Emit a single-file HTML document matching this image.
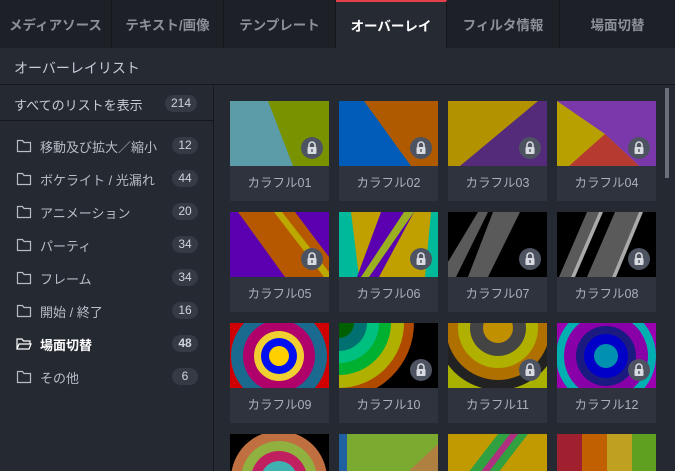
<!DOCTYPE html><html><head><meta charset="utf-8"><style>
*{margin:0;padding:0;box-sizing:border-box}
html,body{width:675px;height:471px;overflow:hidden}
body{background:#252932;font-family:"Liberation Sans","Noto Sans CJK JP",sans-serif;position:relative}
.tabs{position:absolute;left:0;top:0;width:675px;height:48px;background:#1d2027;display:flex}
.tab{height:48px;width:112px;border-right:1px solid #14161b;color:#8c9099;font-size:13.5px;font-weight:bold;display:flex;align-items:center;justify-content:center;white-space:nowrap;overflow:hidden}
.tab.act{background:#262a33;color:#fff;border-top:2px solid #e2404a}
.hdr{position:absolute;left:0;top:48px;width:675px;height:37px;background:#262a33;color:#c8ccd4;font-size:14px;padding:10px 0 0 14px;border-bottom:1px solid #15171c}
.side{position:absolute;left:0;top:86px;width:214px;height:385px;background:#252932;border-right:1px solid #15171c}
.all{height:35px;border-bottom:1px solid #15171c;color:#c8ccd4;font-size:13px;padding:9px 0 0 14px;position:relative}
.badge{position:absolute;right:16px;background:#353a45;color:#d0d4dc;font-size:12px;border-radius:9px;height:17px;line-height:17px;padding:0 6px;min-width:26px;text-align:center}
.row{position:absolute;left:0;width:214px;height:24px;color:#b8bcc4;font-size:13px}
.row svg{position:absolute;left:16px;top:5px}
.row span.t{position:absolute;left:40px;top:3px}
.row .badge{top:3px}
.card{position:absolute;width:99px;height:100px;background:#2f333d;overflow:hidden}
.card svg.th{display:block}
.card .lb{position:absolute;top:65px;left:0;width:99px;height:35px;text-align:center;color:#a9b0bc;font-size:12.5px;line-height:35px}
.lock{position:absolute;left:71px;top:36px}
.sb{position:absolute;left:665px;top:88px;width:4px;height:90px;background:#6b707b}
</style></head><body>
<div class="tabs">
<div class="tab">メディアソース</div>
<div class="tab">テキスト/画像</div>
<div class="tab">テンプレート</div>
<div class="tab act" style="width:111px">オーバーレイ</div>
<div class="tab" style="width:113px">フィルタ情報</div>
<div class="tab" style="width:115px;border:none">場面切替</div>
</div>
<div class="hdr">オーバーレイリスト</div>
<div class="side">
<div class="all">すべてのリストを表示<span class="badge" style="top:9px">214</span></div>
</div>
<div id="rows"></div>
<div class="sb"></div>
<script>
var items=[["移動及び拡大／縮小",12],["ボケライト / 光漏れ",44],["アニメーション",20],["パーティ",34],["フレーム",34],["開始 / 終了",16],["場面切替",48],["その他",6]];
var h="";
items.forEach(function(it,i){var y=134+i*33;var act=i==6;
var ic=act?'<svg width="16" height="14" viewBox="0 0 16 14"><path d="M1 12V2h5l1.5 2H14v3" fill="none" stroke="#fff" stroke-width="1.2"/><path d="M1 12l2-5h12l-2 5z" fill="none" stroke="#fff" stroke-width="1.2"/></svg>':'<svg width="16" height="14" viewBox="0 0 16 14"><path d="M1.5 12.5V1.5h5l1.5 2h6.5v9z" fill="none" stroke="#b8bcc4" stroke-width="1.2"/></svg>';
h+='<div class="row" style="top:'+y+'px;'+(act?'color:#fff;font-weight:bold':'')+'">'+ic+'<span class="t">'+it[0]+'</span><span class="badge">'+it[1]+'</span></div>';});
var th=[
'<rect width="99" height="65" fill="#799200"/><polygon points="0,0 38,0 63,65 0,65" fill="#5b9ca8"/>',
'<rect width="99" height="65" fill="#b05a00"/><polygon points="0,0 25,0 72,65 0,65" fill="#005cb8"/>',
'<rect width="99" height="65" fill="#b39200"/><polygon points="90,0 99,0 99,65 12,65" fill="#542b7b"/>',
'<rect width="99" height="65" fill="#7a38ab"/><polygon points="0,0 48,33 82,65 0,65" fill="#b7a000"/><polygon points="48,33 82,65 12,65" fill="#b63a30"/>',
'<rect width="99" height="65" fill="#5a00b0"/><polygon points="8,0 65,0 99,45 99,65 55,65" fill="#b65800"/><polygon points="44,0 52,0 99,60 99,65 94,65" fill="#bba800"/>',
'<rect width="99" height="65" fill="#00b89a"/><polygon points="12,0 92,0 86,65 20,65" fill="#c0a000"/><polygon points="42,0 75,0 40,65 18,65" fill="#5a00b0"/><polygon points="65,0 75,0 30,65 22,65" fill="#9ab020"/>',
'<rect width="99" height="65" fill="#000"/><polygon points="30,0 40,0 8,65 0,65 0,50" fill="#5a5a5a"/><polygon points="45,0 72,0 40,65 20,65" fill="#5a5a5a"/>',
'<rect width="99" height="65" fill="#000"/><polygon points="30,0 42,0 14,65 2,65" fill="#5a5a5a"/><polygon points="42,0 46,0 18,65 14,65" fill="#aaa"/><polygon points="58,0 82,0 55,65 30,65" fill="#5a5a5a"/><polygon points="82,0 86,0 59,65 55,65" fill="#aaa"/>',
'<rect width="99" height="65" fill="#d00000"/><circle cx="49" cy="33" r="48" fill="#1a6a90"/><circle cx="49" cy="33" r="36" fill="#b0006a"/><circle cx="49" cy="33" r="25" fill="#f0d030"/><circle cx="49" cy="33" r="18" fill="#0010f0"/><circle cx="49" cy="33" r="10" fill="#ffd000"/>',
'<rect width="99" height="65" fill="#000"/><circle cx="0" cy="0" r="75" fill="#b04a00"/><circle cx="0" cy="0" r="65" fill="#b0b000"/><circle cx="0" cy="0" r="52" fill="#00b030"/><circle cx="0" cy="0" r="40" fill="#00c080"/><circle cx="0" cy="0" r="28" fill="#007070"/><circle cx="0" cy="0" r="15" fill="#006000"/><polygon points="75,20 99,10 99,65 60,65" fill="#000"/>',
'<rect width="99" height="65" fill="#a8b000"/><circle cx="50" cy="5" r="62" fill="#222"/><circle cx="50" cy="5" r="52" fill="#b07000"/><circle cx="50" cy="5" r="40" fill="#b0b000"/><circle cx="50" cy="5" r="28" fill="#444"/><circle cx="50" cy="5" r="15" fill="#c09000"/>',
'<rect width="99" height="65" fill="#9a00b0"/><circle cx="49" cy="33" r="50" fill="#00b0b0"/><circle cx="49" cy="33" r="42" fill="#8a00a8"/><circle cx="49" cy="33" r="30" fill="#1a1a80"/><circle cx="49" cy="33" r="22" fill="#0000c8"/><circle cx="49" cy="33" r="12" fill="#0090b0"/>',
'<rect width="99" height="65" fill="#000"/><circle cx="49" cy="45" r="48" fill="#c07040"/><circle cx="49" cy="45" r="38" fill="#90b040"/><circle cx="49" cy="45" r="28" fill="#c02060"/><circle cx="49" cy="45" r="18" fill="#40b0b0"/>',
'<rect width="99" height="65" fill="#7aaa30"/><polygon points="99,10 99,65 40,65" fill="#b08040"/><rect width="8" height="65" fill="#2060a0"/>',
'<rect width="99" height="65" fill="#c09a00"/><polygon points="50,0 80,0 30,65 0,65" fill="#30a040"/><polygon points="62,0 70,0 20,65 12,65" fill="#b03080"/>',
'<rect width="99" height="65" fill="#60a020"/><rect width="25" height="65" fill="#a02030"/><rect x="25" width="25" height="65" fill="#c06000"/><rect x="50" width="25" height="65" fill="#c0a020"/>'
];
var lock='<svg class="lock" width="22" height="22" viewBox="0 0 22 22"><circle cx="11" cy="11" r="11" fill="#4e5362"/><path d="M8 10V8a3 3 0 0 1 6 0v2" fill="none" stroke="#d8dbe0" stroke-width="1.6"/><rect x="6.5" y="10" width="9" height="7" rx="1" fill="#d8dbe0"/><rect x="10.3" y="12" width="1.4" height="3" fill="#4e5362"/></svg>';
for(var i=0;i<16;i++){var c=i%4,r=Math.floor(i/4);var x=230+c*109,y=101+r*111;
var hh=r<3?100:(471-y);
h+='<div class="card" style="left:'+x+'px;top:'+y+'px;height:'+hh+'px"><svg class="th" width="99" height="'+(r<3?65:hh)+'" viewBox="0 0 99 '+(r<3?65:hh)+'" preserveAspectRatio="xMinYMin slice">'+th[i]+'</svg>'+((i!=8&&r<3)?lock:'')+(r<3?'<div class="lb">カラフル'+(i<9?'0':'')+(i+1)+'</div>':'')+'</div>';}
document.getElementById('rows').innerHTML=h;
</script>
</body></html>
